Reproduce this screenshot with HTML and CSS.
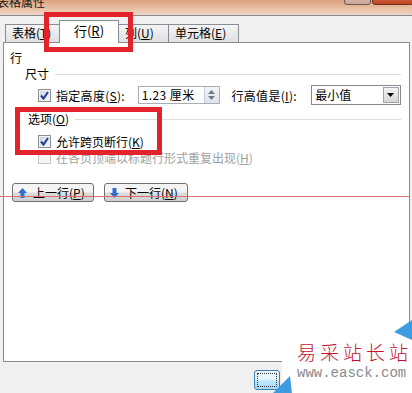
FILE: index.html
```html
<!DOCTYPE html>
<html lang="zh-CN">
<head>
	<meta charset="UTF-8">
	<title>表格属性</title>
	<link rel="stylesheet" href="styles.css">
</head>
<body>
	<div class="window">
		<div class="titlebar">
			<span class="title">表格属性</span>
			<div class="winbtns">
				<span class="wb"></span>
				<span class="wb close"></span>
			</div>
		</div>

		<div class="tabs">
			<span class="tab">表格(<u>T</u>)</span>
			<span class="tab active">行(<u>R</u>)</span>
			<span class="tab">列(<u>U</u>)</span>
			<span class="tab">单元格(<u>E</u>)</span>
		</div>

		<div class="panel">
			<div class="sec-title">行</div>

			<div class="group-head"><span>尺寸</span><i class="rule"></i></div>
			<div class="height-row">
				<span class="chk checked"></span>
				<span class="lbl">指定高度(<u>S</u>):</span>
				<div class="spin">
					<span class="spin-val">1.23 厘米</span>
					<span class="spin-btns">
						<svg width="7" height="4" viewBox="0 0 7 4"><path d="M0 4 L3.5 0 L7 4 Z" fill="#6d7c8c"/></svg>
						<svg width="7" height="4" viewBox="0 0 7 4"><path d="M0 0 L3.5 4 L7 0 Z" fill="#6d7c8c"/></svg>
					</span>
				</div>
				<span class="lbl lbl-rule">行高值是(<u>I</u>):</span>
				<div class="select">
					<span class="select-val">最小值</span>
					<span class="select-btn">
						<svg width="7" height="4" viewBox="0 0 7 4"><path d="M0 0 L3.5 4 L7 0 Z" fill="#000"/></svg>
					</span>
				</div>
			</div>

			<div class="group-head opt-head"><span>选项(<u>O</u>)</span><i class="rule"></i></div>
			<div class="chk-row">
				<span class="chk checked"></span>
				<span class="lbl">允许跨页断行(<u>K</u>)</span>
			</div>
			<div class="chk-row disabled">
				<span class="chk"></span>
				<span class="lbl">在各页顶端以标题行形式重复出现(<u>H</u>)</span>
			</div>

			<div class="nav-row">
				<button class="nav-btn">
					<svg width="9" height="10" viewBox="0 0 9 10"><path d="M4.5 0 L9 5 L6.5 5 L6.5 10 L2.5 10 L2.5 5 L0 5 Z" fill="#2f6fd0"/></svg>
					<span>上一行(<u>P</u>)</span>
				</button>
				<button class="nav-btn">
					<svg width="9" height="10" viewBox="0 0 9 10"><path d="M4.5 10 L9 5 L6.5 5 L6.5 0 L2.5 0 L2.5 5 L0 5 Z" fill="#2f6fd0"/></svg>
					<span>下一行(<u>N</u>)</span>
				</button>
			</div>
		</div>

		<div class="footer">
			<span class="ok-btn"><i></i></span>
		</div>

		<!-- 标注框 -->
		<div class="mark mark-tab"></div>
		<div class="mark mark-opt"></div>
		<div class="redline"></div>

		<!-- 水印 -->
		<div class="watermark">
			<svg class="wm-bg" width="140" height="76" viewBox="0 0 140 76">
				<path d="M10 14 L140 14 L140 76 L10 76 Z" fill="#fff"/>
				<path d="M122 14 L140 2 L140 22 Z" fill="#3d9be0"/>
				<path d="M0 76 L18 58 L20 76 Z" fill="#3d9be0"/>
			</svg>
			<div class="wm-cn">易采站长站</div>
			<div class="wm-en">www.easck.com</div>
		</div>
	</div>
</body>
</html>
```

FILE: styles.css
```css
*{
	padding: 0;
	margin: 0;
	box-sizing: border-box;
}
body {
	width: 412px;
	height: 393px;
	overflow: hidden;
	background: #f0f0f0;
	font-family: "Noto Sans CJK SC", "Liberation Sans", sans-serif;
	font-size: 12px;
	color: #000;
}
u {
	text-decoration: underline;
}
.window {
	position: relative;
	width: 412px;
	height: 393px;
	display: flex;
	flex-direction: column;
}

/* 标题栏 */
.titlebar {
	height: 16px;
	display: flex;
	justify-content: space-between;
	background: linear-gradient(to bottom, #dba27c, #ecc6ad 70%, #e9d6c9);
	border-bottom: 1px solid #8a8a8a;
	overflow: hidden;
}
.title {
	margin-top: -6px;
	margin-left: -3px;
	line-height: 16px;
	font-size: 12px;
	color: #1a1a1a;
}
.winbtns {
	display: flex;
	margin-top: -12px;
	margin-right: -2px;
}
.wb {
	width: 27px;
	height: 17px;
	border: 1px solid #6b5a52;
	border-radius: 3px;
	background: linear-gradient(#e8cdbb, #c9a896);
}
.wb.close {
	width: 42px;
	margin-left: 1px;
	background: linear-gradient(#e08a6c, #c34422);
	border-color: #6b3020;
}

/* 选项卡 */
.tabs {
	height: 26px;
	display: flex;
	align-items: flex-end;
	padding-left: 5px;
}
.tab {
	height: 18px;
	line-height: 16px;
	padding: 0 6px;
	border: 1px solid #898c95;
	border-bottom: none;
	margin-right: -1px;
	background: linear-gradient(#f4f4f4, #e0e0e0);
	white-space: nowrap;
}
.tab:nth-child(1) { width: 55px; }
.tab:nth-child(3) { width: 51px; }
.tab:nth-child(4) { width: 71px; }
.tab.active {
	position: relative;
	z-index: 2;
	width: 60px;
	height: 23px;
	margin-bottom: -1px;
	background: #fff;
	text-align: center;
	line-height: 20px;
	font-size: 13px;
}

/* 内容面板 */
.panel {
	width: 407px;
	height: 320px;
	margin-left: 3px;
	background: #fff;
	border: 1px solid #898c95;
	padding: 0 8px 0 6px;
}
.sec-title {
	margin-top: 7px;
	line-height: 16px;
}
.group-head {
	display: flex;
	align-items: center;
	line-height: 16px;
	padding-left: 15px;
}
.group-head .rule {
	flex: 1;
	height: 1px;
	margin-left: 6px;
	margin-top: 1px;
	background: #dcdcdc;
}
.opt-head {
	margin-top: 6px;
	padding-left: 18px;
}

.chk {
	width: 13px;
	height: 13px;
	border: 1px solid #8e8f8f;
	background: linear-gradient(135deg, #dcdcdc, #fcfcfc);
	flex: none;
	box-shadow: inset 0 0 0 1px #f4f4f4;
}
.chk.checked {
	background:
		url("data:image/svg+xml;utf8,<svg xmlns='http://www.w3.org/2000/svg' width='11' height='11'><path d='M2 5.5 L4.5 8.5 L9 2' fill='none' stroke='%23213f8a' stroke-width='2'/></svg>") center no-repeat,
		linear-gradient(135deg, #c6d4e8, #f4f7fb);
}

.height-row {
	display: flex;
	align-items: center;
	height: 20px;
	margin-top: 3px;
	padding-left: 28px;
}
.height-row .lbl {
	margin-left: 5px;
	width: 82px;
	letter-spacing: 0.3px;
}
.spin {
	display: flex;
	height: 18px;
	width: 82px;
	border: 1px solid #abadb3;
}
.spin-val {
	flex: 1;
	line-height: 16px;
	padding-left: 3px;
	font-size: 12px;
	letter-spacing: 0.4px;
}
.spin-btns {
	width: 15px;
	display: flex;
	flex-direction: column;
	align-items: center;
	justify-content: space-around;
	background: linear-gradient(#f2f5f8, #dde3ea);
	border-left: 1px solid #c6ccd4;
	padding: 2px 0;
}
.height-row .lbl-rule {
	margin-left: 12px;
	width: 80px;
}
.select {
	display: flex;
	height: 20px;
	width: 90px;
	border: 1px solid #828790;
}
.select-val {
	flex: 1;
	line-height: 18px;
	padding-left: 3px;
}
.select-btn {
	width: 16px;
	margin: 1px;
	display: flex;
	align-items: center;
	justify-content: center;
	border: 1px solid #a0a4aa;
	background: linear-gradient(#f4f4f4, #d6d6d6);
}

.chk-row {
	display: flex;
	align-items: center;
	height: 16px;
	padding-left: 28px;
}
.opt-head + .chk-row {
	margin-top: 6px;
}
.chk-row .lbl {
	margin-left: 5px;
}
.chk-row.disabled {
	color: #a0a0a0;
}
.chk-row.disabled .chk {
	border-color: #c8c8c8;
	background: #f4f4f4;
}

.nav-row {
	display: flex;
	gap: 10px;
	margin-top: 18px;
	padding-left: 2px;
}
.nav-btn {
	display: flex;
	align-items: center;
	gap: 6px;
	width: 82px;
	height: 19px;
	padding: 0 0 0 5px;
	border: 1px solid #707070;
	border-radius: 3px;
	background: linear-gradient(#f4f4f4 45%, #dcdcdc 55%, #d0d0d0);
	font-family: "Noto Sans CJK SC", "Liberation Sans", sans-serif;
	font-size: 12px;
	line-height: 17px;
	color: #000;
	white-space: nowrap;
}
.nav-btn svg {
	flex: none;
}
.nav-btn + .nav-btn {
	width: 84px;
}

/* 底部 */
.footer {
	flex: 1;
	padding: 8px 0 0 254px;
}
.ok-btn {
	display: block;
	width: 26px;
	height: 20px;
	border: 1px solid #3c7fb1;
	border-radius: 3px;
	background: linear-gradient(#eaf6fd 45%, #bee6fd 55%, #a7d9f5);
	padding: 2px;
}
.ok-btn i {
	display: block;
	height: 100%;
	border: 1px dotted #333;
}

/* 红色标注 */
.mark {
	position: absolute;
	border: 5px solid #e3232b;
}
.mark-tab {
	left: 44px;
	top: 12px;
	width: 89px;
	height: 40px;
}
.mark-opt {
	left: 15px;
	top: 107px;
	width: 147px;
	height: 48px;
}
.redline {
	position: absolute;
	left: 0;
	top: 196px;
	width: 409px;
	height: 1px;
	background: #d9706e;
}

/* 水印 */
.watermark {
	position: absolute;
	left: 272px;
	top: 318px;
	width: 140px;
	height: 75px;
}
.wm-bg {
	position: absolute;
	left: 0;
	top: 0;
}
.wm-cn {
	position: relative;
	margin: 23px 0 0 25px;
	font-family: "Noto Sans CJK SC", serif;
	font-weight: 300;
	font-size: 19px;
	line-height: 22px;
	letter-spacing: 4px;
	color: #c8102e;
	white-space: nowrap;
}
.wm-en {
	position: relative;
	margin: 3px 0 0 25px;
	font-family: "Liberation Mono", monospace;
	font-size: 14px;
	line-height: 14px;
	color: #8a8a8a;
	white-space: nowrap;
}
```
